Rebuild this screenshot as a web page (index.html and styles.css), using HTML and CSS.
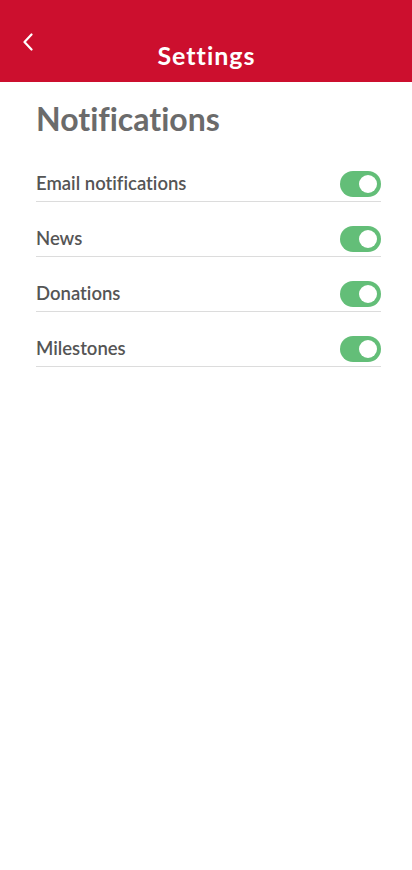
FILE: index.html
```html
<!DOCTYPE html>
<html lang="en">
<head>
<meta charset="utf-8">
<title>Settings</title>
<link rel="stylesheet" href="styles.css">
</head>
<body>
<header class="appbar">
  <button class="back" aria-label="Back">
    <svg width="12" height="18" viewBox="0 0 12 18"><path d="M9.5 1.5 L2.5 9 L9.5 16.5" fill="none" stroke="#fff" stroke-width="2.2" stroke-linecap="round" stroke-linejoin="round"/></svg>
  </button>
  <h1 class="title">Settings</h1>
</header>
<main class="content">
  <h2 class="section-title">Notifications</h2>
  <ul class="list">
    <li class="row"><span class="label">Email notifications</span><span class="toggle on"><span class="knob"></span></span></li>
    <li class="row"><span class="label">News</span><span class="toggle on"><span class="knob"></span></span></li>
    <li class="row"><span class="label">Donations</span><span class="toggle on"><span class="knob"></span></span></li>
    <li class="row"><span class="label">Milestones</span><span class="toggle on"><span class="knob"></span></span></li>
  </ul>
</main>
</body>
</html>
```
FILE: styles.css
```css
* { box-sizing: border-box; }
html, body { margin: 0; padding: 0; background: #fff; }
body {
  font-family: Lato, "Open Sans", sans-serif;
  font-variant-ligatures: none;
  width: 412px;
  height: 870px;
}

.appbar {
  position: relative;
  height: 82px;
  background: #cc0f2e;
  display: flex;
  align-items: flex-end;
  justify-content: center;
  padding-bottom: 12px;
}
.back {
  position: absolute;
  left: 16px;
  top: 28px;
  width: 24px;
  height: 28px;
  border: 0;
  background: none;
  padding: 0;
  display: flex;
  align-items: center;
  justify-content: center;
}
.title {
  margin: 0;
  color: #fff;
  font-size: 25px;
  font-weight: 700;
  line-height: 30px;
  letter-spacing: 1px;
  text-indent: 1px;
}

.content { padding: 18px 31px 0 36px; }
.section-title {
  margin: 0 0 9px;
  color: #6b6b6b;
  font-size: 32px;
  font-weight: 700;
  line-height: 38px;
}
.list { list-style: none; margin: 0; padding: 0; }
.row {
  height: 55px;
  padding-top: 20px;
  display: flex;
  align-items: center;
  justify-content: space-between;
  border-bottom: 1px solid #dcdcdc;
}
.label {
  color: #555;
  font-size: 18.5px;
  font-weight: 600;
  line-height: 24px;
  margin-bottom: 2px;
}
.toggle {
  width: 41px;
  height: 26px;
  border-radius: 13px;
  background: #63be78;
  display: flex;
  align-items: center;
  justify-content: flex-end;
  padding-right: 4px;
}
.knob {
  width: 18px;
  height: 18px;
  border-radius: 50%;
  background: #fff;
}
```
